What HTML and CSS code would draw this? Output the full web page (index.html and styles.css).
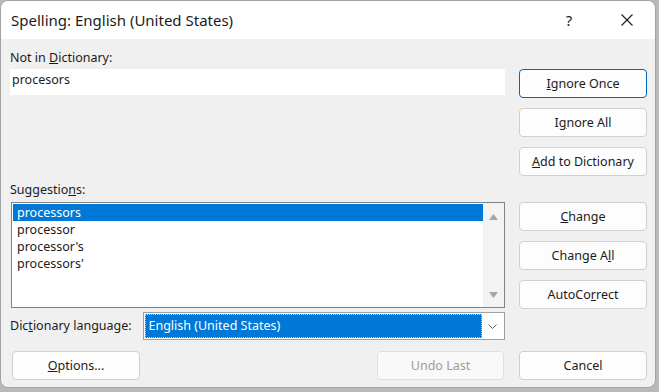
FILE: index.html
```html
<!DOCTYPE html>
<html>
<head>
    <meta charset="utf-8">
    <title>Spelling: English (United States)</title>
    <link rel="stylesheet" href="styles.css">
</head>
<body>
<div class="window">
    <div class="titlebar">
        <span class="title">Spelling: English (United States)</span>
        <span class="help">?</span>
        <span class="close">
            <svg width="12" height="12" viewBox="0 0 12 12"><path d="M0.5 0.5 L11.5 11.5 M11.5 0.5 L0.5 11.5" stroke="#1b1b1b" stroke-width="1.1" fill="none"/></svg>
        </span>
    </div>
    <div class="content">
        <div class="left">
            <div class="label">Not in <u>D</u>ictionary:</div>
            <div class="word">procesors</div>
            <div class="label suggest-label">Suggestio<u>n</u>s:</div>
            <div class="listbox">
                <div class="items">
                    <div class="item selected">processors</div>
                    <div class="item">processor</div>
                    <div class="item">processor's</div>
                    <div class="item">processors'</div>
                </div>
                <div class="scrollbar">
                    <svg width="9" height="6" viewBox="0 0 9 6"><path d="M4.5 0 L9 6 L0 6 Z" fill="#a5a5a5"/></svg>
                    <svg width="9" height="6" viewBox="0 0 9 6"><path d="M0 0 L9 0 L4.5 6 Z" fill="#a5a5a5"/></svg>
                </div>
            </div>
            <div class="lang-row">
                <span class="label">Dic<u>t</u>ionary language:</span>
                <div class="combo">
                    <span class="combo-value">English (United States)</span>
                    <span class="combo-arrow">
                        <svg width="9" height="5" viewBox="0 0 9 5"><path d="M0.5 0.5 L4.5 4.5 L8.5 0.5" stroke="#606060" stroke-width="1" fill="none"/></svg>
                    </span>
                </div>
            </div>
            <div class="bottom-row">
                <button class="btn"><u>O</u>ptions...</button>
                <button class="btn" disabled>Undo Last</button>
            </div>
        </div>
        <div class="right">
            <button class="btn focused"><u>I</u>gnore Once</button>
            <button class="btn">I<u>g</u>nore All</button>
            <button class="btn"><u>A</u>dd to Dictionary</button>
            <button class="btn change-btn"><u>C</u>hange</button>
            <button class="btn">Change A<u>l</u>l</button>
            <button class="btn">AutoCo<u>r</u>rect</button>
            <button class="btn cancel-btn">Cancel</button>
        </div>
    </div>
</div>
</body>
</html>
```

FILE: styles.css
```css
body {
    margin: 0;
    background-color: #b9b9b9;
    font-family: "Noto Sans", "Open Sans", sans-serif;
    font-size: 12.5px;
    color: #1b1b1b;
}

.window {
    width: 654px;
    height: 386px;
    background-color: #f0f0f0;
    border: 1px solid #a3a3a3;
    border-radius: 8px;
    overflow: hidden;
    display: flex;
    flex-direction: column;
}

.titlebar {
    height: 38px;
    background-color: #ffffff;
    display: flex;
    align-items: center;
    padding-left: 10px;
}
.title {
    font-size: 15px;
    flex: 1;
}
.help {
    font-size: 15px;
    width: 20px;
    text-align: center;
    margin-right: 42px;
}
.close {
    width: 12px;
    height: 12px;
    margin-right: 22px;
    display: flex;
}

.content {
    flex: 1;
    display: flex;
    gap: 14px;
    padding: 0 8px 7px 9px;
}

.left {
    width: 495px;
    display: flex;
    flex-direction: column;
}
.label {
    height: 16px;
    line-height: 16px;
    margin-top: 11px;
}
.word {
    height: 26px;
    line-height: 22px;
    margin-top: 3px;
    background-color: #ffffff;
    padding-left: 2px;
}
.suggest-label {
    margin-top: 87px;
}

.listbox {
    margin: 4px 0 0 1px;
    height: 104px;
    border: 1px solid #828282;
    background-color: #ffffff;
    display: flex;
}
.items {
    flex: 1;
    padding: 1px 0 0 1px;
}
.item {
    height: 17px;
    line-height: 17px;
    padding-left: 4px;
}
.item.selected {
    background-color: #0078d7;
    color: #ffffff;
}
.scrollbar {
    width: 21px;
    background-color: #f3f3f3;
    display: flex;
    flex-direction: column;
    align-items: center;
    justify-content: space-between;
    padding: 11px 0 9px;
    box-sizing: border-box;
}

.lang-row {
    margin-top: 4px;
    height: 28px;
    display: flex;
    align-items: center;
}
.lang-row .label {
    margin-top: 0;
    width: 134px;
}
.combo {
    width: 359px;
    border: 1px solid #a0a0a0;
    background-color: #ffffff;
    display: flex;
    padding: 1px;
    height: 24px;
}
.combo-value {
    flex: 1;
    background-color: #0078d7;
    color: #ffffff;
    border: 1px dotted #f2c27c;
    line-height: 22px;
    padding-left: 2px;
}
.combo-arrow {
    width: 21px;
    display: flex;
    align-items: center;
    justify-content: center;
}

.bottom-row {
    margin-top: 11px;
    display: flex;
    justify-content: space-between;
    padding: 0 1px 0 2px;
}

.btn {
    width: 128px;
    height: 29px;
    padding: 0;
    font-family: inherit;
    font-size: 12.5px;
    color: #1b1b1b;
    background-color: #fdfdfd;
    border: 1px solid #d0d0d0;
    border-radius: 4px;
}
.btn:disabled {
    color: #9d9d9d;
    background-color: #f9f9f9;
    border-color: #e0e0e0;
    width: 127px;
}
.btn.focused {
    border-color: #0067c0;
}

.right {
    width: 128px;
    display: flex;
    flex-direction: column;
    gap: 10px;
    padding-top: 30px;
}
.change-btn {
    margin-top: 16px;
}
.cancel-btn {
    margin-top: auto;
}
```
